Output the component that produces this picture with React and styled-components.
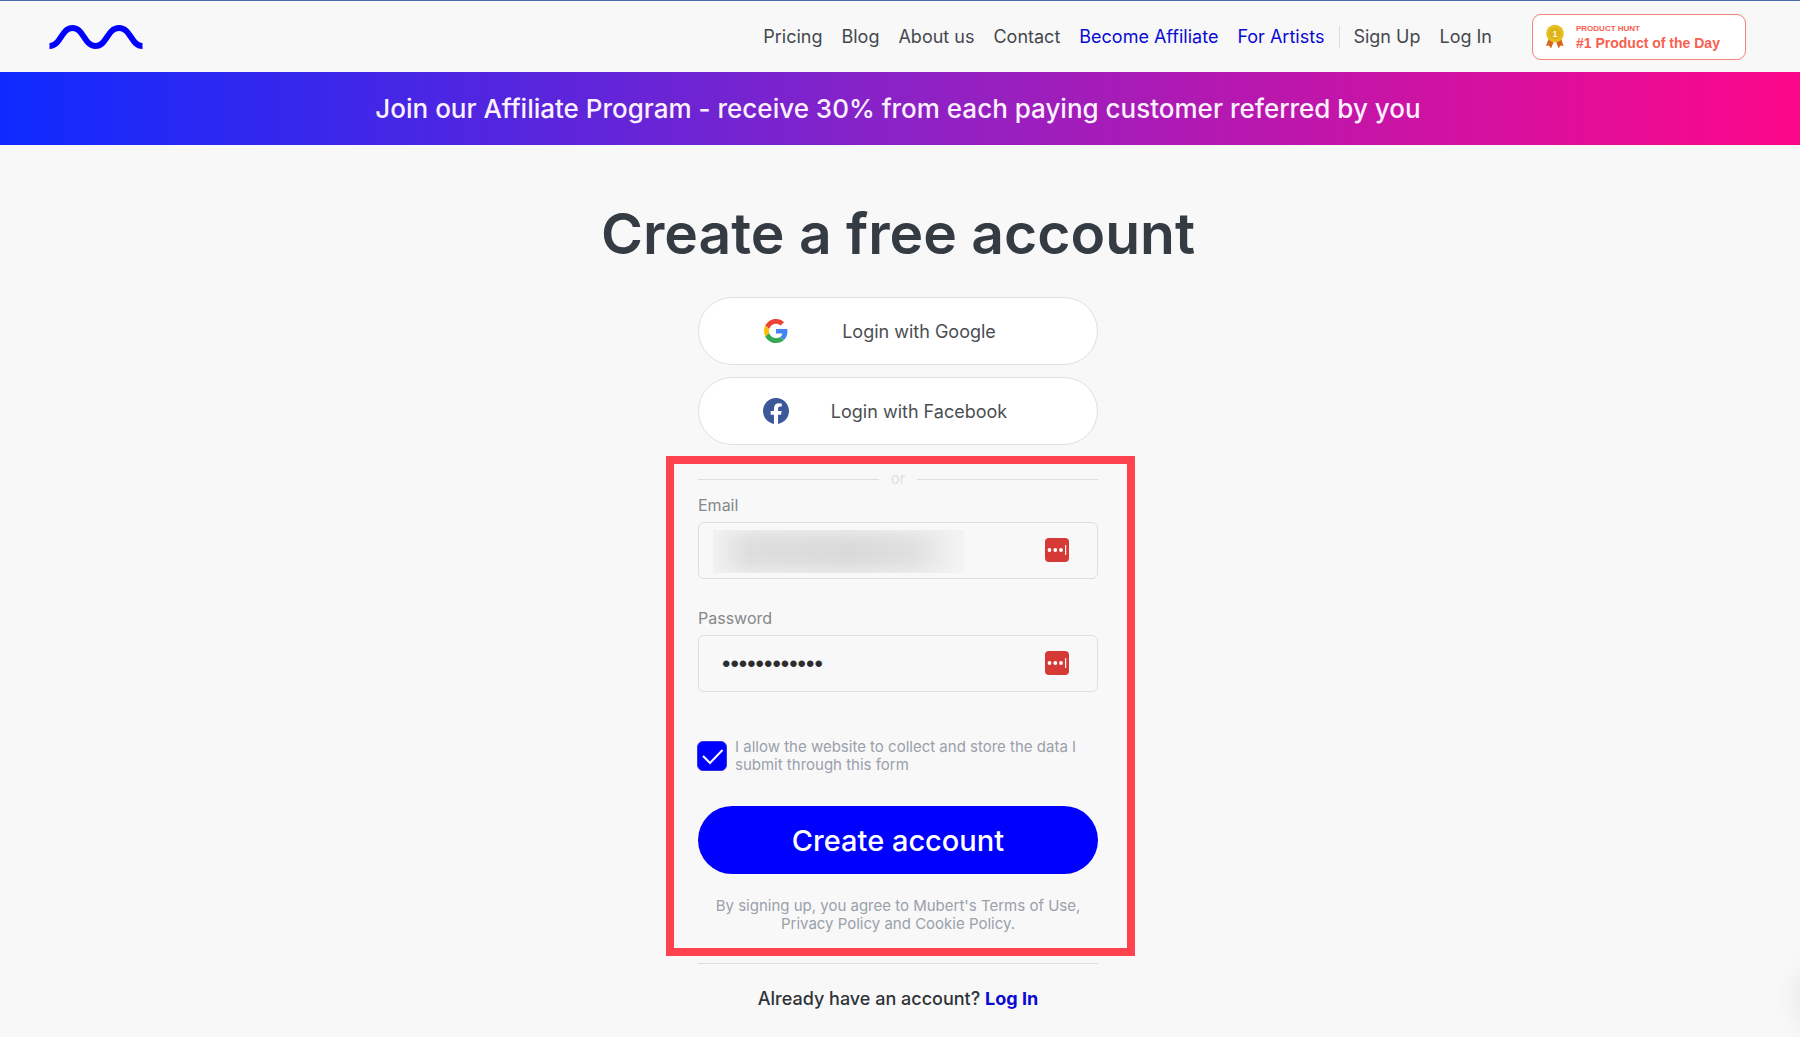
import React from 'react'
import styled, { createGlobalStyle } from 'styled-components'

const GlobalStyle = createGlobalStyle`
  *,
  *::before,
  *::after {
    box-sizing: border-box;
  }

  body {
    margin: 0;

    font-family: Inter, 'Liberation Sans', sans-serif;
    font-size: 18px;

    color: #353a41;
    background: #f8f8f8;
  }

  a {
    color: inherit;
    text-decoration: none;
  }

  button,
  input {
    font-family: inherit;
  }
`

const Page = styled.div`
  display: flex;
  flex-flow: column;

  min-height: 100vh;

  border-top: 1px solid #4a6ea9;
`

const Header = styled.header`
  display: flex;
  flex-flow: row nowrap;
  justify-content: space-between;
  align-items: center;

  height: 71px;
  padding: 0 54px 0 49px;
`

const LogoLink = styled.a`
  display: flex;
`

const HeaderRight = styled.div`
  display: flex;
  align-items: center;
  gap: 40px;
`

const Nav = styled.nav`
  display: flex;
  flex-flow: row nowrap;
  align-items: center;
  gap: 19px;

  line-height: 22px;
`

const NavLink = styled.a`
  color: ${props => (props.$accent ? '#0a0ad2' : '#44484d')};
  white-space: nowrap;
`

const AuthLinks = styled.div`
  display: flex;
  gap: 19px;

  margin-left: -4px;
  padding-left: 13px;

  border-left: 1px solid #dcdcdc;
`

const Badge = styled.a`
  display: flex;
  flex: 0 0 auto;
  align-items: center;
  gap: 11px;

  width: 214px;
  height: 46px;
  padding: 0 12px;

  font-family: 'Liberation Sans', Arial, sans-serif;
  font-weight: 700;

  color: #f9604f;
  background: white;

  border: 1px solid #f4827a;
  border-radius: 9px;
`

const BadgeText = styled.span`
  display: flex;
  flex-flow: column;
`

const BadgeKicker = styled.span`
  font-size: 8px;
  line-height: 12px;
`

const BadgeTitle = styled.span`
  font-size: 14px;
  line-height: 16px;
  white-space: nowrap;
`

const Banner = styled.a`
  display: flex;
  justify-content: center;
  align-items: center;

  height: 73px;
  padding-right: 4px;

  font-size: 26px;
  font-weight: 500;

  color: #fdf0ff;
  background: linear-gradient(90deg, #0e2aff 0%, #8b22c6 50%, #fd078a 100%);
`

const Main = styled.main`
  display: flex;
  flex-flow: column;
  align-items: center;

  padding: 56px 4px 24px 0;
`

const Title = styled.h1`
  margin: 0 0 30px;

  font-size: 57px;
  line-height: 66px;
  font-weight: 600;

  color: #353b43;
`

const Column = styled.div`
  display: flex;
  flex-flow: column;

  width: 400px;
`

const SocialButton = styled.button`
  display: flex;
  align-items: center;

  height: 68px;
  margin-bottom: 12px;
  padding: 0 48px 0 64px;

  font-size: 18px;

  color: #4b4e52;
  background: white;

  border: 1px solid #e0e0e0;
  border-radius: 34px;
`

const SocialIcon = styled.span`
  display: flex;
  justify-content: center;

  flex: 0 0 26px;
`

const SocialLabel = styled.span`
  flex: 1;

  text-align: center;
`

const Form = styled.form`
  display: flex;
  flex-flow: column;

  margin: -1px -37px 0 -32px;
  padding: 4px 29px 15px 24px;

  border: 8px solid #ff434e;
`

const Or = styled.div`
  display: flex;
  align-items: center;
  gap: 12px;

  margin-bottom: 4px;

  font-size: 15px;
  line-height: 22px;

  color: #dfe0e2;

  &::before,
  &::after {
    flex: 1;

    height: 1px;

    content: '';
    background: #dedede;
  }
`

const Field = styled.div`
  display: flex;
  flex-flow: column;

  margin-bottom: 28px;
`

const Label = styled.label`
  margin-bottom: 5px;

  font-size: 16px;
  line-height: 23px;

  color: #85878a;
`

const InputWrap = styled.div`
  position: relative;

  display: flex;
`

const Input = styled.input`
  flex: 1;

  min-width: 0;
  height: 57px;
  padding: 0 60px 0 23px;

  font-size: 18px;

  color: #2b2d31;
  background: transparent;

  border: 1px solid #dedede;
  border-radius: 6px;
`

// Liberation has rounder, tighter bullets than Inter
const PasswordInput = styled(Input)`
  font-family: 'Liberation Sans', Arial, sans-serif;
  font-size: 24px;
`

const ManagerButton = styled.button`
  position: absolute;
  top: 16px;
  right: 29px;

  display: flex;

  padding: 0;

  background: none;
  border: 0;
`

// hides the address typed in the field
const Redacted = styled.span`
  position: absolute;
  top: 8px;
  left: 15px;

  width: 251px;
  height: 43px;

  background: linear-gradient(
    90deg,
    #f0f0f0 0%,
    #dedede 14%,
    #dadada 55%,
    #e0e0e0 80%,
    #f6f6f6 100%
  );
  box-shadow: inset 0 0 16px 2px #f2f2f2;
`

const Consent = styled.label`
  display: flex;
  align-items: center;
  gap: 8px;

  margin: 18px 0 32px -1px;

  font-size: 15px;
  line-height: 18px;

  color: #9aa0ab;
`

const CheckWrap = styled.span`
  display: grid;

  flex: 0 0 30px;

  > * {
    grid-area: 1 / 1;
  }

  svg {
    pointer-events: none;
  }
`

const Checkbox = styled.input`
  width: 30px;
  height: 30px;
  margin: 0;

  appearance: none;

  background: #0000ff;
  border: 1px solid #3434e0;
  border-radius: 6px;
`

const SubmitButton = styled.button`
  height: 68px;
  margin-bottom: 23px;

  font-size: 29px;
  font-weight: 500;

  color: white;
  background: #0000ff;

  border: 0;
  border-radius: 34px;
`

const Terms = styled.p`
  margin: 0;

  font-size: 15px;
  line-height: 18px;

  color: #9aa0ab;

  text-align: center;
`

const LoginPrompt = styled.p`
  margin: 7px 0 0;
  padding-top: 24px;

  font-weight: 500;
  line-height: 22px;

  color: #2f3338;

  text-align: center;

  border-top: 1px solid #dedede;
`

const LoginLink = styled.a`
  font-weight: 700;

  color: #0a0ad2;
`

const LauncherShadow = styled.div`
  position: fixed;
  right: -62px;
  bottom: 9px;

  width: 60px;
  height: 60px;

  border-radius: 50%;
  box-shadow: 0 0 32px rgba(0, 0, 0, 0.12);
`

const Logo = () => (
  <svg width="94" height="24" viewBox="0 0 94 24" fill="none" aria-hidden="true">
    <path
      d="M0.5 21 C12 21 12 3 23.5 3 S35 21 46.5 21 S58 3 70 3 S82 21 93.500 21"
      stroke="#0000ff"
      strokeWidth="6"
    />
  </svg>
)

const Medal = () => (
  <svg width="20" height="26" viewBox="0 0 20 26" aria-hidden="true">
    <path d="M4 14 L1 22 L4 21.500 L6 24.500 L9.500 16 Z" fill="#d9661f" />
    <path d="M16 14 L18.500 22 L15.500 21.500 L13.500 24.500 L10.500 16 Z" fill="#d9661f" />
    <circle cx="10" cy="9.500" r="8.800" fill="#e6c01e" />
    <circle cx="10" cy="9.500" r="6" fill="#dcb31a" />
    <text
      x="10"
      y="13"
      fontSize="9"
      fontWeight="700"
      fontFamily="Liberation Sans"
      textAnchor="middle"
      fill="#fff8d8"
    >
      1
    </text>
  </svg>
)

const GoogleIcon = () => (
  <svg width="24" height="24" viewBox="0 0 48 48" aria-hidden="true">
    <path
      fill="#ea4335"
      d="M24 9.5c3.540 0 6.710 1.220 9.210 3.600l6.850-6.850C35.900 2.380 30.470 0 24 0 14.620 0 6.510 5.380 2.560 13.220l7.980 6.190C12.430 13.720 17.740 9.500 24 9.500z"
    />
    <path
      fill="#4285f4"
      d="M46.980 24.550c0-1.570-.15-3.090-.38-4.550H24v9.020h12.940c-.58 2.960-2.260 5.480-4.780 7.180l7.730 6c4.510-4.180 7.090-10.360 7.090-17.650z"
    />
    <path
      fill="#fbbc05"
      d="M10.530 28.590c-.48-1.450-.76-2.990-.76-4.590s.27-3.140.76-4.590l-7.980-6.190C.92 16.460 0 20.120 0 24c0 3.880.92 7.540 2.560 10.780l7.970-6.190z"
    />
    <path
      fill="#34a853"
      d="M24 48c6.480 0 11.930-2.130 15.890-5.810l-7.730-6c-2.150 1.450-4.920 2.300-8.160 2.300-6.260 0-11.570-4.220-13.470-9.910l-7.980 6.190C6.510 42.620 14.620 48 24 48z"
    />
  </svg>
)

const FacebookIcon = () => (
  <svg width="26" height="26" viewBox="0 0 24 24" aria-hidden="true">
    <path
      fill="#3b5998"
      d="M24 12.073c0-6.627-5.373-12-12-12s-12 5.373-12 12c0 5.990 4.388 10.954 10.125 11.854v-8.385H7.078v-3.470h3.047V9.430c0-3.007 1.792-4.669 4.533-4.669 1.312 0 2.686.235 2.686.235v2.953H15.830c-1.491 0-1.956.925-1.956 1.874v2.250h3.328l-.532 3.470h-2.796v8.385C19.612 23.027 24 18.062 24 12.073z"
    />
  </svg>
)

const ManagerIcon = () => (
  <svg width="24" height="24" viewBox="0 0 24 24" aria-hidden="true">
    <rect width="24" height="24" rx="4" fill="#d63a36" />
    <circle cx="4.500" cy="12" r="1.900" fill="white" />
    <circle cx="10.300" cy="12" r="1.900" fill="white" />
    <circle cx="16" cy="12" r="1.900" fill="white" />
    <rect x="20" y="7" width="1.200" height="10" rx="0.600" fill="white" />
  </svg>
)

const navLinks = [
  { title: 'Pricing' },
  { title: 'Blog' },
  { title: 'About us' },
  { title: 'Contact' },
  { title: 'Become Affiliate', accent: true },
  { title: 'For Artists', accent: true },
]

const App = () => (
  <Page>
    <GlobalStyle />
    <Header>
      <LogoLink href="#" aria-label="Mubert">
        <Logo />
      </LogoLink>
      <HeaderRight>
        <Nav>
          {navLinks.map(({ title, accent }) => (
            <NavLink key={title} href="#" $accent={accent}>
              {title}
            </NavLink>
          ))}
          <AuthLinks>
            <NavLink href="#">Sign Up</NavLink>
            <NavLink href="#">Log In</NavLink>
          </AuthLinks>
        </Nav>
        <Badge href="#">
          <Medal />
          <BadgeText>
            <BadgeKicker>PRODUCT HUNT</BadgeKicker>
            <BadgeTitle>#1 Product of the Day</BadgeTitle>
          </BadgeText>
        </Badge>
      </HeaderRight>
    </Header>
    <Banner href="#">
      Join our Affiliate Program - receive 30% from each paying customer referred by you
    </Banner>
    <Main>
      <Title>Create a free account</Title>
      <Column>
        <SocialButton type="button">
          <SocialIcon>
            <GoogleIcon />
          </SocialIcon>
          <SocialLabel>Login with Google</SocialLabel>
        </SocialButton>
        <SocialButton type="button">
          <SocialIcon>
            <FacebookIcon />
          </SocialIcon>
          <SocialLabel>Login with Facebook</SocialLabel>
        </SocialButton>
        <Form onSubmit={e => e.preventDefault()}>
          <Or>or</Or>
          <Field>
            <Label htmlFor="email">Email</Label>
            <InputWrap>
              <Input id="email" type="email" />
              <Redacted />
              <ManagerButton type="button" aria-label="Fill email">
                <ManagerIcon />
              </ManagerButton>
            </InputWrap>
          </Field>
          <Field>
            <Label htmlFor="password">Password</Label>
            <InputWrap>
              <PasswordInput id="password" type="password" defaultValue="abcdefghijkl" />
              <ManagerButton type="button" aria-label="Fill password">
                <ManagerIcon />
              </ManagerButton>
            </InputWrap>
          </Field>
          <Consent>
            <CheckWrap>
              <Checkbox type="checkbox" defaultChecked />
              <svg width="30" height="30" viewBox="0 0 30 30" fill="none" aria-hidden="true">
                <path d="M6 15 L13 22 L25.500 9" stroke="white" strokeWidth="2" />
              </svg>
            </CheckWrap>
            <span>I allow the website to collect and store the data I submit through this form</span>
          </Consent>
          <SubmitButton type="submit">Create account</SubmitButton>
          <Terms>
            By signing up, you agree to Mubert's <a href="#">Terms of Use</a>,
            <br />
            <a href="#">Privacy Policy</a> and <a href="#">Cookie Policy</a>.
          </Terms>
        </Form>
        <LoginPrompt>
          Already have an account? <LoginLink href="#">Log In</LoginLink>
        </LoginPrompt>
      </Column>
    </Main>
    <LauncherShadow />
  </Page>
)

export default App
